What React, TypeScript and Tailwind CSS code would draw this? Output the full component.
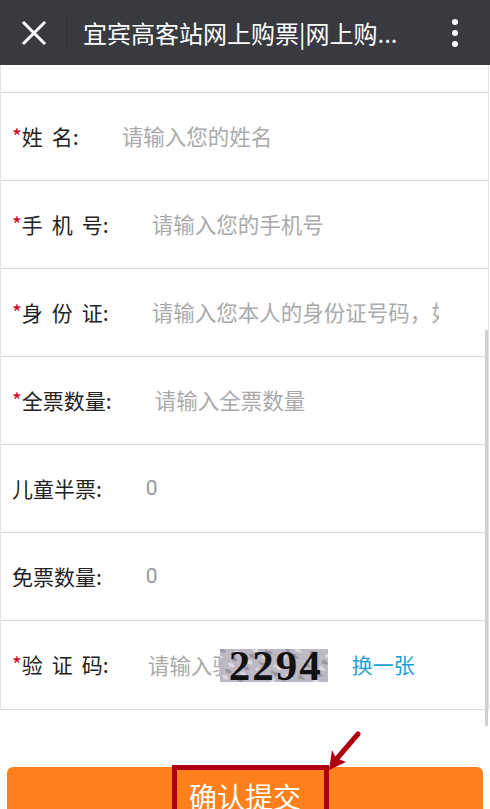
import React from 'react'

const cjk = { fontFamily: '"Noto Sans CJK SC", "Noto Sans", sans-serif' }

type Row = {
  label: string[]
  required?: boolean
  placeholder?: string
  value?: string
}

const rows: Row[] = [
  { label: ['姓', '名'], required: true, placeholder: '请输入您的姓名' },
  { label: ['手', '机', '号'], required: true, placeholder: '请输入您的手机号' },
  { label: ['身', '份', '证'], required: true, placeholder: '请输入您本人的身份证号码，如有字母X请大写' },
  { label: ['全票数量'], required: true, placeholder: '请输入全票数量' },
  { label: ['儿童半票'], value: '0' },
  { label: ['免票数量'], value: '0' }
]

// spaced label, e.g. "姓 名:"
function Label({ parts, required }: { parts: string[]; required?: boolean }) {
  return (
    <span className="shrink-0 flex items-center text-[21px] text-[#222] whitespace-nowrap">
      {required && <span className="text-[#d0021b]">*</span>}
      {parts.map((p, i) => (
        <span key={i} className={i > 0 ? 'ml-[9px]' : ''}>
          {p}
        </span>
      ))}
      <span>:</span>
    </span>
  )
}

function Captcha() {
  const dots = Array.from({ length: 110 }, (_, i) => ({
    x: (i * 37) % 108,
    y: (i * 53) % 33,
    r: 1 + (i % 3) * 0.6
  }))
  return (
    <div className="relative w-[108px] h-[33px] bg-[#bcb8c4] overflow-hidden shrink-0">
      <svg className="absolute inset-0" width="108" height="33" viewBox="0 0 108 33">
        {dots.map((d, i) => (
          <circle key={i} cx={d.x} cy={d.y} r={d.r} fill={i % 2 ? '#e6e3ea' : '#8f8b97'} opacity="0.7" />
        ))}
      </svg>
      <span
        className="absolute inset-0 flex items-center justify-center pl-[4px] text-[43px] font-bold text-[#111] tracking-[2px] leading-none"
        style={{ fontFamily: '"Liberation Serif", serif' }}
      >
        2294
      </span>
    </div>
  )
}

export default function App() {
  return (
    <div className="w-[490px] h-[809px] overflow-hidden bg-white relative" style={cjk}>
      {/* title bar */}
      <div className="h-[65px] bg-[#393a3f] flex items-center">
        <div className="w-[67px] flex justify-center">
          <svg width="26" height="26" viewBox="0 0 26 26">
            <path d="M3 3 L23 23 M23 3 L3 23" stroke="#fff" strokeWidth="3" strokeLinecap="square" />
          </svg>
        </div>
        <div className="w-[1px] h-[34px] bg-[#2e2f33]" />
        <div className="ml-[15px] text-[24px] text-white flex-1 whitespace-nowrap">宜宾高客站网上购票|网上购...</div>
        <div className="w-[70px] flex flex-col items-center gap-[5px]">
          <span className="w-[6px] h-[6px] rounded-full bg-white" />
          <span className="w-[6px] h-[6px] rounded-full bg-white" />
          <span className="w-[6px] h-[6px] rounded-full bg-white" />
        </div>
      </div>

      {/* form */}
      <div className="w-[489px] border-l border-r border-[#e2e2e2]">
        <div className="h-[28px] border-b border-[#d9d9d9]" />
        {rows.map((r) => (
          <div key={r.label.join('')} className="h-[88px] border-b border-[#d9d9d9] flex items-center pl-[11px]">
            <Label parts={r.label} required={r.required} />
            {r.placeholder ? (
              <input
                className="ml-[43px] w-[287px] text-[21.5px] text-[#333] placeholder:text-[#aaaaaa] outline-none bg-transparent"
                placeholder={r.placeholder}
              />
            ) : (
              <span className="ml-[44px] text-[21px] text-[#999]" style={{ fontFamily: 'Roboto, sans-serif' }}>
                {r.value}
              </span>
            )}
          </div>
        ))}
        <div className="h-[89px] border-b border-[#d9d9d9] flex items-center pl-[11px]">
          <Label parts={['验', '证', '码']} required />
          <input
            className="ml-[39px] w-[72px] text-[21.5px] placeholder:text-[#aaaaaa] outline-none bg-transparent"
            placeholder="请输入验证码"
          />
          <Captcha />
          <span className="ml-[24px] text-[21px] text-[#1d9fd3]">换一张</span>
        </div>
      </div>

      {/* submit */}
      <div className="px-[7px] pt-[57px]">
        <button className="w-full h-[60px] rounded-t-[6px] bg-[#fe7f1b] text-white text-[28px] flex justify-center pt-[8px]">
          确认提交
        </button>
      </div>

      {/* scrollbar */}
      <div className="absolute left-[485px] top-[330px] w-[3px] h-[396px] bg-[#cfcfcf]" />

      {/* annotation */}
      <div className="absolute left-[172px] top-[765px] w-[157px] h-[60px] border-[5px] border-[#b0000f]" />
      <svg className="absolute left-[320px] top-[728px]" width="45" height="50" viewBox="0 0 45 50">
        <path d="M38 6 L14 34" stroke="#b0000f" strokeWidth="5" strokeLinecap="round" />
        <path d="M9 42 L12 22 L16 30 L26 34 Z" fill="#b0000f" />
      </svg>
    </div>
  )
}
